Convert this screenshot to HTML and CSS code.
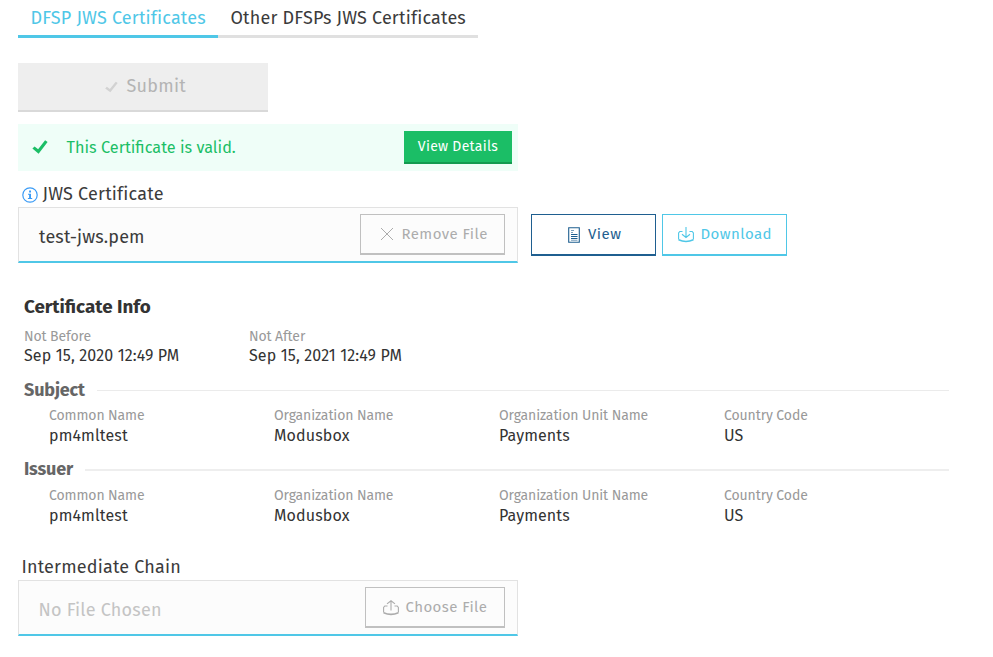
FILE: index.html
```html
<!DOCTYPE html>
<html lang="en">
<head>
<meta charset="utf-8">
<title>JWS Certificates</title>
<link rel="stylesheet" href="styles.css">
</head>
<body>
<nav class="tabs">
  <a class="tab active">DFSP JWS Certificates</a>
  <a class="tab other">Other DFSPs JWS Certificates</a>
</nav>

<button class="submit" disabled>
  <svg class="submit-icon" viewBox="0 0 16 14"><path d="M.2 8.800 2.300 6.600l3.700 2.800L13.200.4l2.400 1.700L6.600 13.600z"/></svg>
  <span>Submit</span>
</button>

<div class="alert">
  <svg class="alert-icon" viewBox="0 0 16 14"><path d="M.4 8.600 2.600 6.500l3.500 2.700L13.100.2l2.500 1.700L6.600 13.800z"/></svg>
  <span class="alert-text">This Certificate is valid.</span>
  <button class="details">View Details</button>
</div>

<div class="label">
  <svg class="info" viewBox="0 0 16 16"><circle cx="8" cy="8" r="7.200"/><path d="M7.100 3.600h1.900v1.800H7.100zM6 6.700h3v4.300h1.200v1.100H5.900V11h1.200V7.800H6z"/></svg>
  <span class="jws">JWS Certificate</span>
</div>
<div class="row">
  <div class="field">
    <span class="filename">test-jws.pem</span>
    <button class="btn remove">
      <svg class="icon-x" viewBox="0 0 14 14"><path d="M1 1l12 12M13 1 1 13"/></svg>
      <span>Remove File</span>
    </button>
  </div>
  <button class="btn view">
    <svg class="icon-doc" viewBox="0 0 12 16"><path d="M.7.7h10.600v14.600H.7zM3 7.500h6.500M3 9.500h6.500M3 11.500h6.500"/><path class="faint" d="M3 3.500h3M3 5.500h2M3 13.300h6.500"/></svg>
    <span>View</span>
  </button>
  <button class="btn download">
    <svg class="icon-tray" viewBox="0 0 16 16"><path d="M4.500 4.500H1.800L.6 6v6.500M11.500 4.500h2.700L15.400 6v6.500M8 0v10.500M4 7.300l4 3.200 4-3.200"/><path class="base" d="M.6 12.800Q8 16.200 15.400 12.800"/></svg>
    <span>Download</span>
  </button>
</div>

<section class="cert">
  <h2>Certificate Info</h2>
  <div class="grid dates">
    <div><div class="key">Not Before</div><div class="val">Sep 15, 2020 12:49 PM</div></div>
    <div><div class="key">Not After</div><div class="val">Sep 15, 2021 12:49 PM</div></div>
  </div>
  <h3>Subject</h3>
  <div class="grid party">
    <div><div class="key">Common Name</div><div class="val">pm4mltest</div></div>
    <div><div class="key">Organization Name</div><div class="val">Modusbox</div></div>
    <div><div class="key">Organization Unit Name</div><div class="val">Payments</div></div>
    <div><div class="key">Country Code</div><div class="val">US</div></div>
  </div>
  <h3 class="issuer">Issuer</h3>
  <div class="grid party">
    <div><div class="key">Common Name</div><div class="val">pm4mltest</div></div>
    <div><div class="key">Organization Name</div><div class="val">Modusbox</div></div>
    <div><div class="key">Organization Unit Name</div><div class="val">Payments</div></div>
    <div><div class="key">Country Code</div><div class="val">US</div></div>
  </div>
</section>

<div class="label chain"><span>Intermediate Chain</span></div>
<div class="field">
  <span class="filename empty">No File Chosen</span>
  <button class="btn choose">
    <svg class="icon-tray" viewBox="0 0 16 16"><path d="M4.500 6H1.800L.6 7.500v5M11.500 6h2.700l1.200 1.500v5M8 10.500V.7M4 3.900 8 .7l4 3.200"/><path class="base" d="M.6 12.800Q8 16 15.400 12.800"/></svg>
    <span>Choose File</span>
  </button>
</div>
</body>
</html>
```
FILE: styles.css
```css
* { box-sizing: border-box; }
body {
  margin: 0;
  padding-left: 18px;
  background: #fff;
  color: #3b3b3b;
  font-family: "Fira Sans", "Noto Sans", sans-serif;
  white-space: nowrap;
}
button {
  display: flex;
  align-items: flex-start;
  margin: 0;
  padding: 0;
  border: 0;
  background: none;
  font-family: inherit;
  white-space: nowrap;
}
svg { display: block; flex: none; fill: none; stroke: currentColor; }

.tabs { display: flex; height: 38px; }
.tab {
  padding-left: 12.4px;
  border-bottom: 3px solid #e0e0e0;
  font-size: 18px;
  line-height: 36px;
}
.tab.active { width: 200px; border-color: #4fc7e7; color: #4fc7e7; letter-spacing: .18px; }
.tab.other { width: 260px; letter-spacing: .18px; }

.submit {
  width: 250px;
  height: 49px;
  margin-top: 25px;
  padding-left: 87px;
  border-bottom: 2px solid #d9d9d9;
  background: #eee;
  color: #b4b4b4;
  font-size: 18px;
  line-height: 46px;
  letter-spacing: .25px;
}
.submit-icon { width: 13px; height: 12px; margin: 18px 8.5px 0 0; fill: #d2d2d2; stroke: none; }

.alert {
  display: flex;
  width: 500px;
  height: 47px;
  margin-top: 12px;
  padding-left: 14px;
  background: #effef8;
  color: #1bbe66;
}
.alert-icon { width: 16px; height: 14px; margin: 16px 18.6px 0 0; fill: currentColor; stroke: none; }
.alert-text { font-size: 16.25px; line-height: 47px; }
.details {
  justify-content: center;
  width: 108px;
  height: 33px;
  margin: 7px 6px 0 auto;
  border-bottom: 2px solid #149a50;
  background: #1bbe66;
  color: #fff;
  font-size: 14px;
  line-height: 31px;
  letter-spacing: .28px;
}

.label {
  display: flex;
  height: 36px;
  padding: 12px 0 0 3.5px;
  font-size: 18px;
  line-height: 22px;
  letter-spacing: .17px;
}
.info { width: 16px; height: 16px; margin: 4px 5px 0 0; color: #3b9bf5; stroke-width: 1.2; }
.info path { fill: currentColor; stroke: none; }
.jws { letter-spacing: .2px; }
.label.chain { margin-top: 19px; }

.row { display: flex; }
.field {
  display: flex;
  justify-content: space-between;
  width: 500px;
  height: 56px;
  border: 1px solid #e2e2e2;
  border-bottom: 2px solid #4fc7e7;
  background: #fcfcfc;
}
.filename { padding: 3px 0 0 20px; font-size: 18px; line-height: 52px; letter-spacing: .15px; }
.filename.empty { padding-left: 19.5px; color: #c4c4c4; letter-spacing: .2px; }

.btn {
  border: 1px solid currentColor;
  border-bottom-width: 2px;
  font-size: 15px;
  line-height: 38px;
}
.field .btn { height: 41px; margin: 6px 12px 0 0; border-color: #c0c0c0; color: #acacac; letter-spacing: .42px; }
.remove { width: 145px; padding-left: 19px; }
.icon-x { width: 14px; height: 14px; margin: 12px 7.500px 0 0; }
.view { width: 125px; height: 42px; margin: 7px 6px 0 13px; padding-left: 36px; color: #1f5f90; letter-spacing: .5px; }
.icon-doc { width: 12px; height: 16px; margin: 12px 8px 0 0; stroke-width: 1.1; }
.faint { opacity: .6; }
.download { width: 125px; height: 42px; margin-top: 7px; padding-left: 15px; color: #4fc7e7; letter-spacing: .42px; }
.icon-tray { width: 16px; height: 16px; margin: 12px 6.500px 0 0; stroke-width: 1.1; }
.base { stroke-width: 1.6; }
.choose { width: 140px; padding-left: 17px; }

.cert { width: 931px; padding: 31px 0 0 6px; }
h2 { margin: 0 0 8px; color: #333; font-size: 18.800px; line-height: 25px; }
.grid { display: grid; grid-template-columns: repeat(4, 225px); }
.key { color: #999; font-size: 14px; line-height: 19px; letter-spacing: -.1px; }
.val { color: #333; font-size: 16px; line-height: 19px; letter-spacing: .13px; }
.party { padding-left: 25px; }
.party .val { margin-top: 1px; }
h3 {
  display: flex;
  align-items: center;
  margin: 12px 0 3px;
  color: #666;
  font-size: 18px;
  line-height: 26px;
  letter-spacing: -.15px;
}
h3::after { content: ""; flex: 1; height: 1px; margin: 1px 0 0 12px; background: #ebebeb; }
h3.issuer { margin: 11px 0 4px; letter-spacing: -.17px; }
h3.issuer::after { height: 2px; margin-top: 2px; background: #eee; }
```
